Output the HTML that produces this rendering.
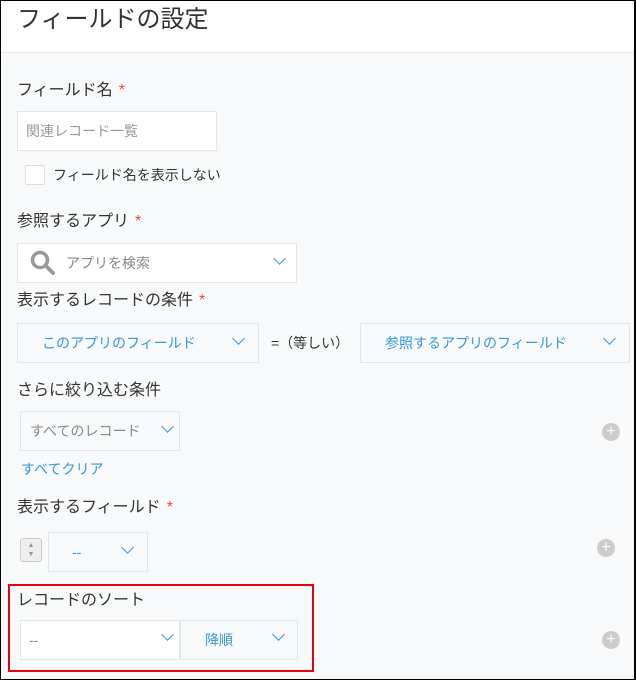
<!DOCTYPE html>
<html><head><meta charset="utf-8"><style>
*{margin:0;padding:0;box-sizing:border-box}
body{width:636px;height:680px;overflow:hidden;font-family:"Liberation Sans","Noto Sans CJK JP",sans-serif;color:#333;background:#f7f9fa;position:relative}
.frame{position:absolute;left:0;top:0;width:636px;height:680px;border:1px solid #000;border-right-width:2px;pointer-events:none;z-index:9}
.hdr{position:absolute;left:0;top:0;width:636px;height:53px;background:#fff;border-bottom:1px solid #e3e7e8}
.t{position:absolute;white-space:nowrap;line-height:1}
.lbl{font-size:16px;color:#333}
.req{color:#e74c3c;margin-left:6px}
.box{position:absolute;border:1px solid #e3e7e8;background:#fff}
.sel{position:absolute;border:1px solid #e3e7e8;background:#f7f9fa}
.blue{color:#3498db}
.chev{position:absolute;width:9px;height:9px;border-right:1.3px solid #3498db;border-bottom:1.3px solid #3498db;transform:rotate(45deg)}
.plus{position:absolute;width:18px;height:18px;border-radius:50%;background:#ccc;color:#fff;font-size:16px;line-height:18px;text-align:center}
</style></head><body>
<div class="hdr"></div>
<div class="t" style="left:17px;top:8px;font-size:24px;color:#333">フィールドの設定</div>

<div class="t lbl" style="left:17px;top:83px">フィールド名<span class="req">*</span></div>
<div class="box" style="left:17px;top:111px;width:200px;height:40px"></div>
<div class="t" style="left:26px;top:124px;font-size:14px;color:#999">関連レコード一覧</div>
<div class="box" style="left:25px;top:165px;width:20px;height:20px;border-radius:2px;border-color:#ddd"></div>
<div class="t" style="left:53px;top:168px;font-size:14px">フィールド名を表示しない</div>

<div class="t lbl" style="left:17px;top:214px">参照するアプリ<span class="req">*</span></div>
<div class="box" style="left:17px;top:243px;width:280px;height:40px"></div>
<svg style="position:absolute;left:29px;top:249px" width="28" height="28" viewBox="0 0 28 28"><circle cx="11" cy="11" r="7.5" fill="none" stroke="#999" stroke-width="3.5"/><line x1="16.5" y1="16.5" x2="24" y2="24" stroke="#999" stroke-width="4" stroke-linecap="round"/></svg>
<div class="t" style="left:66px;top:256px;font-size:14px;color:#888">アプリを検索</div>
<div class="chev" style="left:275px;top:254px"></div>

<div class="t lbl" style="left:17px;top:293px">表示するレコードの条件<span class="req">*</span></div>
<div class="sel" style="left:17px;top:323px;width:242px;height:40px"></div>
<div class="t blue" style="left:42px;top:336px;font-size:14px">このアプリのフィールド</div>
<div class="chev" style="left:234px;top:334px"></div>
<div class="t" style="left:271px;top:336px;font-size:14px">=（等しい）</div>
<div class="sel" style="left:360px;top:323px;width:270px;height:40px"></div>
<div class="t blue" style="left:385px;top:336px;font-size:14px">参照するアプリのフィールド</div>
<div class="chev" style="left:605px;top:334px"></div>

<div class="t lbl" style="left:17px;top:383px">さらに絞り込む条件</div>
<div class="sel" style="left:20px;top:411px;width:160px;height:40px"></div>
<div class="t" style="left:30px;top:424px;font-size:14px;color:#888">すべてのレコード</div>
<div class="chev" style="left:163px;top:422px"></div>
<div class="plus" style="left:602px;top:423px">+</div>
<div class="t blue" style="left:21px;top:462px;font-size:14px">すべてクリア</div>

<div class="t lbl" style="left:17px;top:500px">表示するフィールド<span class="req">*</span></div>
<div style="position:absolute;left:20px;top:538px;width:22px;height:24px;border:1px solid #ccc;border-radius:3px;background:#eee;font-size:7px;color:#999;text-align:center;line-height:9px;padding-top:2px">▲<br>▼</div>
<div class="sel" style="left:48px;top:532px;width:100px;height:40px"></div>
<div class="t blue" style="left:72px;top:545px;font-size:14px">--</div>
<div class="chev" style="left:123px;top:543px"></div>
<div class="plus" style="left:597px;top:539px">+</div>

<div style="position:absolute;left:8px;top:584px;width:306px;height:88px;border:2px solid #e60012"></div>
<div class="t lbl" style="left:17px;top:593px">レコードのソート</div>
<div class="box" style="left:20px;top:620px;width:160px;height:40px"></div>
<div class="t" style="left:29px;top:633px;font-size:14px;color:#888">--</div>
<div class="chev" style="left:163px;top:630px"></div>
<div class="sel" style="left:180px;top:620px;width:118px;height:40px"></div>
<div class="t blue" style="left:205px;top:633px;font-size:14px">降順</div>
<div class="chev" style="left:274px;top:630px"></div>
<div class="plus" style="left:602px;top:631px">+</div>
<div class="frame"></div>
</body></html>
